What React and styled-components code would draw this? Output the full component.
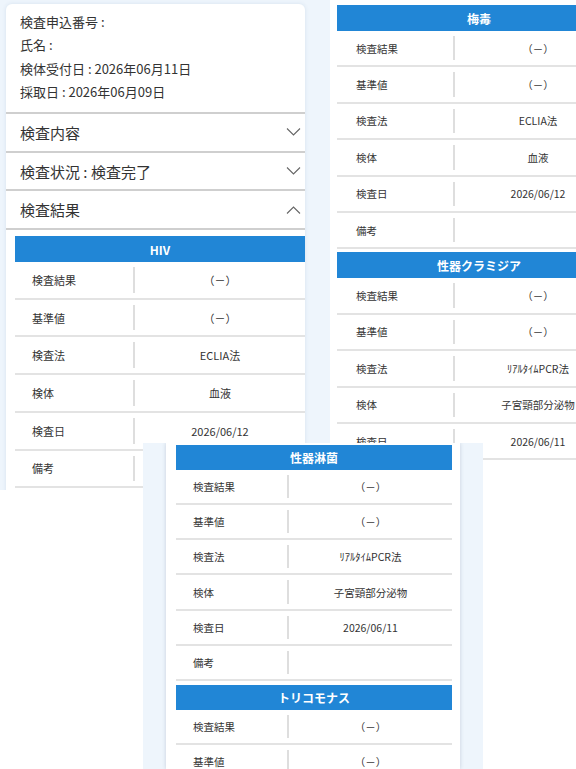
import React from "react"
import styled, { createGlobalStyle } from "styled-components"

const GlobalStyle = createGlobalStyle`
  html, body { margin: 0; padding: 0; background: #fff; }
  body {
    font-family: "Noto Sans CJK JP", "Noto Sans", sans-serif;
    color: #333;
  }
`

const NEG = "（－）"

const hiv = [
  ["検査結果", NEG],
  ["基準値", NEG],
  ["検査法", "ECLIA法"],
  ["検体", "血液"],
  ["検査日", "2026/06/12"],
  ["備考", ""],
]

const pcr = [
  ["検査結果", NEG],
  ["基準値", NEG],
  ["検査法", "ﾘｱﾙﾀｲﾑPCR法"],
  ["検体", "子宮頸部分泌物"],
  ["検査日", "2026/06/11"],
  ["備考", ""],
]

const specs = {
  big: { labelW: 120, labelPad: 17, rowH: 37.7, fs: 11, headH: 26 },
  right: { labelW: 118, labelPad: 19, rowH: 36.4, fs: 10.5, headH: 26 },
  bottom: { labelW: 113, labelPad: 17, rowH: 35.3, fs: 10.5, headH: 24.5 },
}

const Chevron = ({ up }) => (
  <svg width="15" height="8" viewBox="0 0 15 8">
    <polyline
      points={up ? "1,7.5 7.5,1 14,7.5" : "1,0.5 7.5,7 14,0.5"}
      fill="none"
      stroke="#666"
      strokeWidth="1.1"
    />
  </svg>
)

const ResultTable = ({ title, rows, spec }) => (
  <Section>
    <Head $h={spec.headH}>{title}</Head>
    {rows.map(([k, v]) => (
      <Row key={k} $h={spec.rowH} $labelW={spec.labelW} $fs={spec.fs}>
        <Label $pad={spec.labelPad}>{k}</Label>
        <Value>{v}</Value>
      </Row>
    ))}
  </Section>
)

const App = () => (
  <>
    <GlobalStyle />
    <Canvas>
      <Shot $x={0} $y={0} $w={330} $h={490}>
        <MainCard>
          <Info>
            <div>検査申込番号 : </div>
            <div>氏名 : </div>
            <div>検体受付日 : 2026年06月11日</div>
            <div>採取日 : 2026年06月09日</div>
          </Info>
          <AccRow>
            <span>検査内容</span>
            <Chevron />
          </AccRow>
          <AccRow>
            <span>検査状況 : 検査完了</span>
            <Chevron />
          </AccRow>
          <AccRow>
            <span>検査結果</span>
            <Chevron up />
          </AccRow>
          <AccBody>
            <ResultTable title="HIV" rows={hiv} spec={specs.big} />
          </AccBody>
        </MainCard>
      </Shot>

      <Shot $x={330} $y={0} $w={246} $h={462} $bg="#fff">
        <SideCard>
          <ResultTable title="梅毒" rows={hiv} spec={specs.right} />
          <ResultTable title="性器クラミジア" rows={pcr} spec={specs.right} />
        </SideCard>
      </Shot>

      <Shot $x={143} $y={443} $w={340} $h={326}>
        <BottomCard>
          <ResultTable title="性器淋菌" rows={pcr} spec={specs.bottom} />
          <ResultTable title="トリコモナス" rows={pcr.slice(0, 2)} spec={specs.bottom} />
        </BottomCard>
      </Shot>
    </Canvas>
  </>
)

export default App

const Canvas = styled.div`
  position: relative;
  width: 576px;
  height: 769px;
  overflow: hidden;
  background: #fff;
`

const Shot = styled.div`
  position: absolute;
  left: ${({ $x }) => $x}px;
  top: ${({ $y }) => $y}px;
  width: ${({ $w }) => $w}px;
  height: ${({ $h }) => $h}px;
  background: ${({ $bg }) => $bg || "#eef5fc"};
  overflow: hidden;
  display: flex;
  align-items: stretch;
`

const MainCard = styled.div`
  flex: none;
  width: 299px;
  margin: 4px 0 -10px 6px;
  background: #fff;
  border-radius: 6px 6px 0 0;
  box-shadow: 0 0 4px rgba(40, 80, 130, 0.12);
`

const SideCard = styled.div`
  flex: none;
  width: 284px;
  padding: 5px 0 0 7px;
  background: #fff;
  display: flex;
  flex-direction: column;
  gap: 3px;
`

const BottomCard = styled.div`
  flex: none;
  width: 276px;
  margin-left: 23px;
  padding: 2px 8px 0 10px;
  background: #fff;
  box-shadow: 0 0 4px rgba(40, 60, 90, 0.2);
  display: flex;
  flex-direction: column;
  gap: 4px;
`

const Info = styled.div`
  box-sizing: border-box;
  height: 108px;
  padding: 6px 14px 0;
  font-size: 13px;
  line-height: 23.3px;
  white-space: pre;
`

const AccRow = styled.div`
  box-sizing: border-box;
  height: 38.7px;
  display: flex;
  align-items: center;
  justify-content: space-between;
  padding: 0 4px 0 14px;
  border-top: 2px solid #cfcfcf;
  font-size: 15px;
  white-space: pre;
  svg {
    display: block;
  }
`

const AccBody = styled.div`
  border-top: 2px solid #cfcfcf;
  padding: 6px 0 0 9px;
`

const Section = styled.div`
  display: flex;
  flex-direction: column;
`

const Head = styled.div`
  height: ${({ $h }) => $h}px;
  background: #2186d6;
  color: #fff;
  font-size: 12px;
  font-weight: 700;
  display: flex;
  align-items: center;
  justify-content: center;
`

const Row = styled.div`
  box-sizing: border-box;
  height: ${({ $h }) => $h}px;
  display: grid;
  grid-template-columns: ${({ $labelW }) => $labelW}px 1fr;
  border-bottom: 2px solid #e3e3e3;
  font-size: ${({ $fs }) => $fs}px;
`

const Label = styled.div`
  display: flex;
  align-items: center;
  margin: 5px 0;
  padding-left: ${({ $pad }) => $pad}px;
  border-right: 2px solid #dedede;
`

const Value = styled.div`
  display: flex;
  align-items: center;
  justify-content: center;
`
